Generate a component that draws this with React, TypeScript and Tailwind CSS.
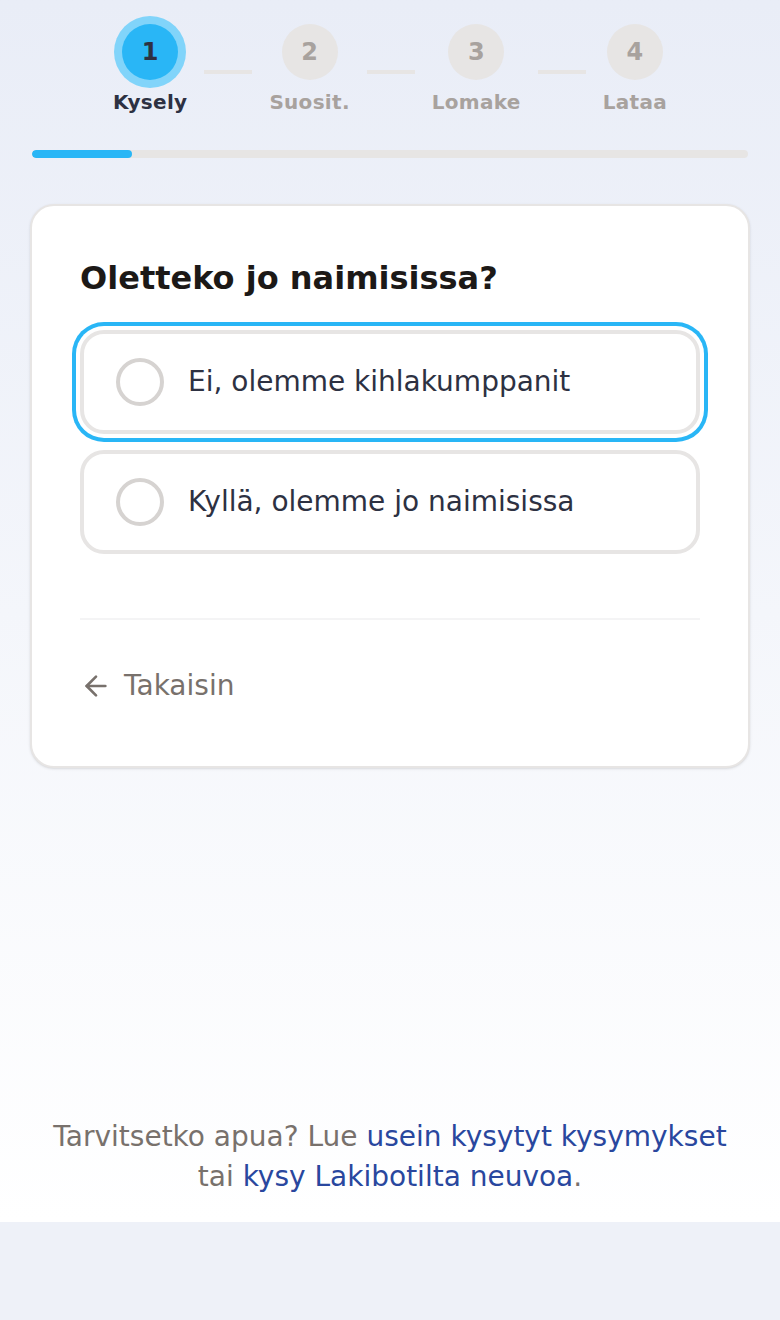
import React from "react";

const font = { fontFamily: '"DejaVu Sans", Verdana, sans-serif' };

function Step({ n, label, active }: { n: number; label: string; active?: boolean }) {
  return (
    <div className="flex flex-col items-center">
      <div
        className={
          active
            ? "w-[56px] h-[56px] rounded-full bg-[#29b6f6] ring-8 ring-[#81d4fa] flex items-center justify-center text-[24px] font-bold text-[#2d3142]"
            : "w-[56px] h-[56px] rounded-full bg-[#e7e5e4] flex items-center justify-center text-[24px] font-bold text-[#a8a29e]"
        }
      >
        {n}
      </div>
      <div
        className={
          active
            ? "mt-2 text-[20px] leading-[28px] font-bold tracking-[0.3px] text-[#2d3142]"
            : "mt-2 text-[20px] leading-[28px] font-bold tracking-[0.3px] text-[#a8a29e]"
        }
      >
        {label}
      </div>
    </div>
  );
}

function Connector() {
  return <div className="w-12 h-1 mt-[46px] bg-[#e7e5e4]" />;
}

function Radio() {
  return <div className="w-12 h-12 shrink-0 rounded-full border-4 border-[#d6d3d1] bg-white" />;
}

export default function App() {
  return (
    <div className="min-h-[1320px] bg-[#eef1f8]" style={font}>
      <div className="h-[1222px] flex flex-col bg-linear-to-b from-[#e9edf7] to-white px-8">
        <div className="flex justify-center items-start gap-[17px] pt-6">
          <Step n={1} label="Kysely" active />
          <Connector />
          <Step n={2} label="Suosit." />
          <Connector />
          <Step n={3} label="Lomake" />
          <Connector />
          <Step n={4} label="Lataa" />
        </div>

        <div className="mt-[34px] h-2 rounded-full bg-[#e7e5e4] overflow-hidden">
          <div className="h-2 w-[14%] rounded-full bg-[#29b6f6]" />
        </div>

        <div className="mt-[46px] -mx-[2px] bg-white border-2 border-[#e7e5e4] rounded-3xl shadow-sm px-12 pt-12 pb-[60px]">
          <h1 className="text-[32px] leading-[48px] font-bold text-[#1c1917]">Oletteko jo naimisissa?</h1>
          <div className="mt-[28px] flex flex-col gap-4">
            <button className="flex items-center gap-6 h-[104px] px-8 rounded-3xl border-4 border-[#e7e5e4] bg-white ring-4 ring-[#29b6f6] ring-offset-4 ring-offset-white text-left">
              <Radio />
              <span className="text-[28px] leading-[40px] text-[#2d3142]">Ei, olemme kihlakumppanit</span>
            </button>
            <button className="flex items-center gap-6 h-[104px] px-8 rounded-3xl border-4 border-[#e7e5e4] bg-white text-left">
              <Radio />
              <span className="text-[28px] leading-[40px] text-[#2d3142]">Kyllä, olemme jo naimisissa</span>
            </button>
          </div>
          <div className="mt-16 h-[2px] bg-[#f4f4f5]" />
          <div className="mt-[46px] flex items-center gap-3 h-10 text-[#78716c]">
            <svg width="32" height="32" viewBox="0 0 24 24" fill="none" stroke="currentColor" strokeWidth="2" strokeLinecap="round" strokeLinejoin="round">
              <path d="m12 19-7-7 7-7" />
              <path d="M19 12H5" />
            </svg>
            <span className="text-[28px] leading-[40px]">Takaisin</span>
          </div>
        </div>

        <div className="flex-1" />

        <p className="pb-[25px] text-center text-[28px] leading-[40px] text-[#78716c]">
          Tarvitsetko apua? Lue <span className="text-[#29479e]">usein kysytyt kysymykset</span>
          <br />
          tai <span className="text-[#29479e]">kysy Lakibotilta neuvoa</span>.
        </p>
      </div>
    </div>
  );
}
